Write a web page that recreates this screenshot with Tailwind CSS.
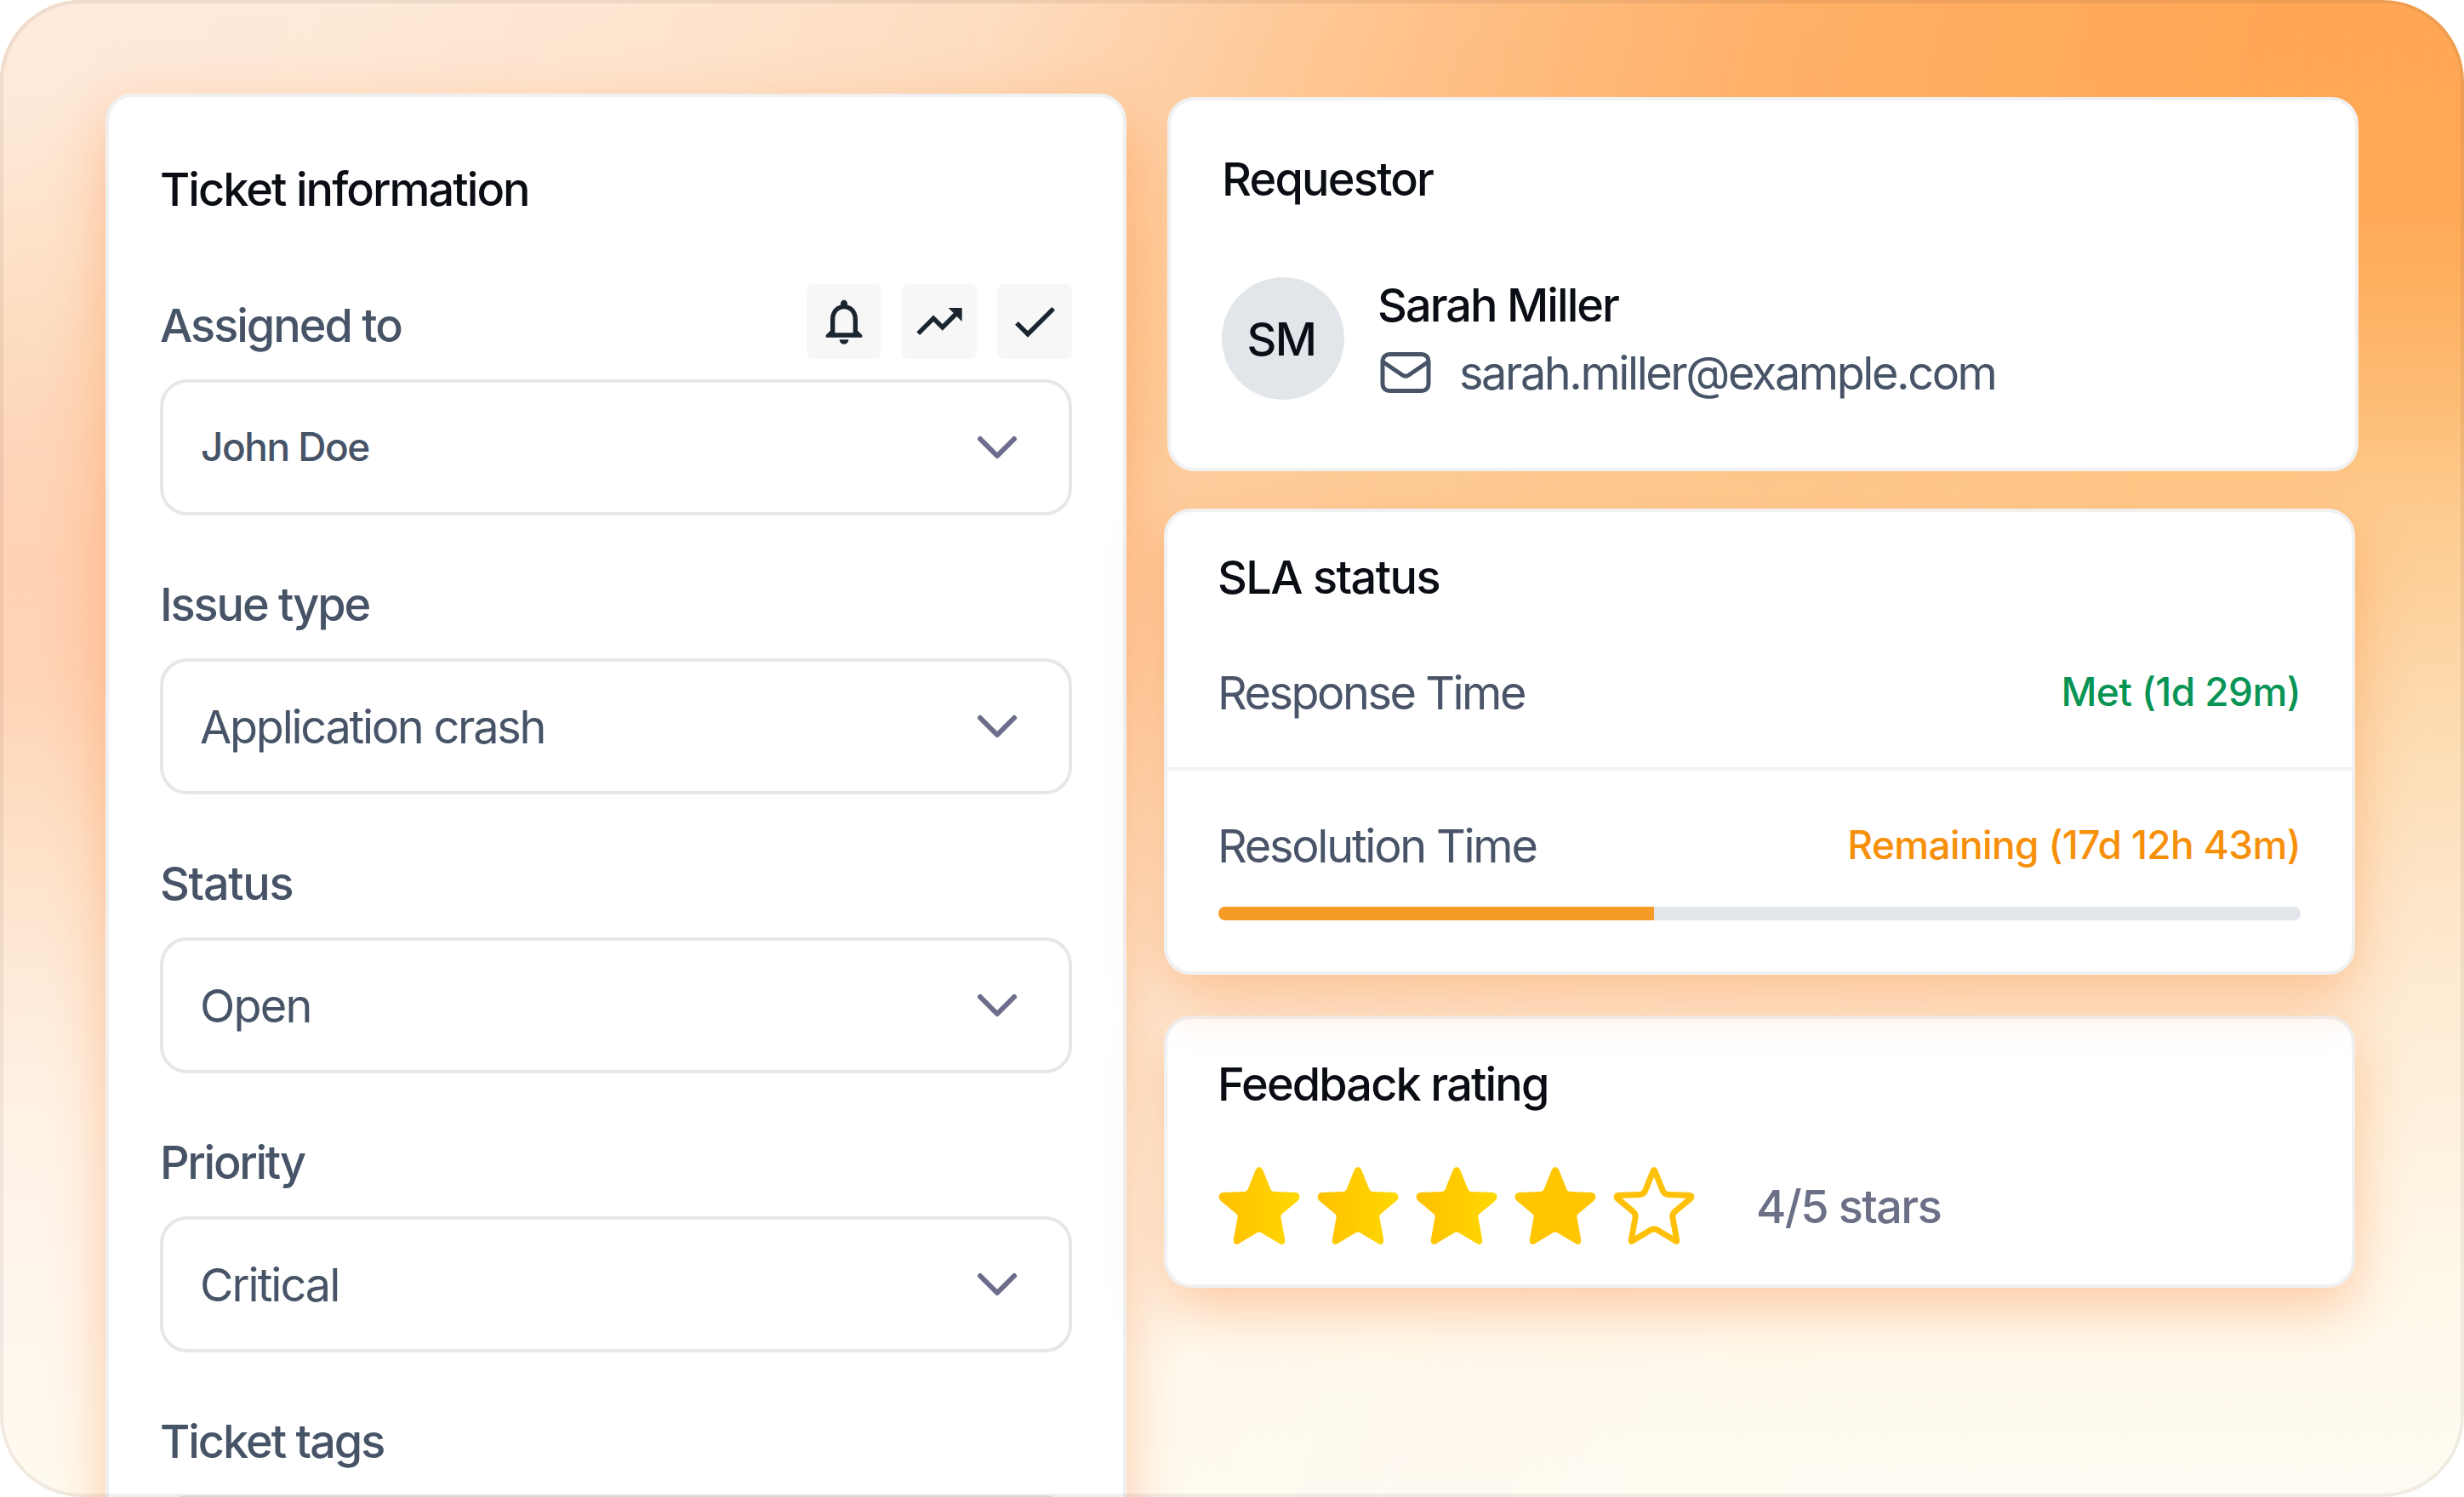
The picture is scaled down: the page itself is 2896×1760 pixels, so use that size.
<!DOCTYPE html>
<html lang="en">
<head>
    <meta charset="utf-8">
    <meta name="viewport" content="width=device-width, initial-scale=1">
    <title>Ticket information</title>
    <script src="https://cdn.jsdelivr.net/npm/@tailwindcss/browser@4"></script>
</head>
<body class="bg-white font-[Inter,'Liberation_Sans',sans-serif]">

    <!-- shared icons -->
    <svg class="absolute size-0">
        <defs>
            <linearGradient id="gold" x1="0" y1="0" x2="1" y2="0">
                <stop offset="0" stop-color="#ffc000"/>
                <stop offset="1" stop-color="#ffd800"/>
            </linearGradient>
            <path id="starPath" d="M44 5Q48 -1 52 5L61.5 28.5Q62.5 30.8 65 31L91 32Q95.5 33 95.4 37.5Q95.2 40 93 42L75 57Q73 58.8 73.4 61L78.3 88Q78.3 93.5 73.5 93L50 79Q48 78 46 79L22.5 93Q17.7 93.5 17.7 88L22.6 61Q23 58.8 21 57L3 42Q.8 40 .6 37.5Q.5 33 5 32L31 31Q33.5 30.8 34.5 28.5Z"/>
            <clipPath id="starClip"><use href="#starPath"/></clipPath>
        </defs>
        <symbol id="chevron" viewBox="0 0 64 64">
            <path d="M12 22l20 20 20-20" fill="none" stroke="#6b6d8a" stroke-width="6" stroke-linecap="round" stroke-linejoin="round"/>
        </symbol>
    </svg>

    <div class="relative w-[2896px] h-[1760px] overflow-hidden rounded-[96px]">

        <!-- background: right-hand tones, with the left-hand tones faded over them -->
        <div class="absolute inset-0 bg-[linear-gradient(180deg,#ffa755_0%,#ffa856_13%,#feae5e_18%,#fdbb72_26%,#fdcb8e_34%,#fdd5a4_43%,#fddeb6_51%,#fee8cd_62%,#fef0dc_74%,#fff8ea_85%,#fffbf2_100%)]"></div>
        <div class="absolute inset-0 bg-[linear-gradient(180deg,#feebdd_0%,#fee9d8_8%,#fee3cc_15%,#fddcbf_23%,#fed5b8_30%,#ffd1b4_37%,#ffd2b5_45%,#fed9bd_51%,#fee2cb_58%,#feead9_66%,#fff2e6_75%,#fff6ed_86%,#fffaee_100%)] [mask-image:linear-gradient(105deg,rgba(0,0,0,1)_2%,rgba(0,0,0,.97)_12%,rgba(0,0,0,.9)_24%,rgba(0,0,0,.78)_35%,rgba(0,0,0,.65)_40%,rgba(0,0,0,.5)_45%,rgba(0,0,0,.3)_54%,rgba(0,0,0,.13)_63%,rgba(0,0,0,0)_80%)]"></div>

        <main class="relative flex items-start pl-[124px] pt-[110px]">

            <!-- Ticket information -->
            <section class="w-[1200px] h-[1760px] shrink-0 rounded-[32px] border-4 border-[#f0f0f1] bg-white px-[60px] pt-[77px] text-[54px] leading-[64px] font-medium text-[#475467] shadow-[0_24px_64px_rgba(249,115,22,0.34)]">
                <h2 class="tracking-[-1.94px] text-[#0a0d14]">Ticket information</h2>

                <div class="mt-[79px] flex h-[88px] items-start justify-between">
                    <label class="mt-[17px] tracking-[-2px]">Assigned to</label>
                    <div class="flex gap-6">
                        <button class="flex size-[88px] items-center justify-center rounded-lg bg-[#f7f7f7] text-[#1b2530]">
                            <svg class="size-16" viewBox="0 0 24 24" fill="currentColor"><path d="M12 22c1.1 0 2-.9 2-2h-4c0 1.1.9 2 2 2zm6-6v-5c0-3.07-1.63-5.64-4.5-6.32V4c0-.83-.67-1.5-1.5-1.5s-1.5.67-1.5 1.5v.68C7.64 5.36 6 7.92 6 11v5l-2 2v1h16v-1l-2-2zm-2 1H8v-6c0-2.48 1.51-4.5 4-4.5s4 2.02 4 4.5v6z"/></svg>
                        </button>
                        <button class="flex size-[88px] items-center justify-center rounded-lg bg-[#f7f7f7] text-[#1b2530]">
                            <svg class="size-16" viewBox="0 0 24 24" fill="currentColor"><path d="M16 6l2.29 2.29-4.88 4.88-4-4L2 16.59 3.41 18l6-6 4 4 6.3-6.29L22 12V6z"/></svg>
                        </button>
                        <button class="flex size-[88px] items-center justify-center rounded-lg bg-[#f7f7f7] text-[#1b2530]">
                            <svg class="size-16" viewBox="0 0 24 24" fill="currentColor"><path d="M9 16.17L4.83 12l-1.42 1.41L9 19 21 7l-1.41-1.41z"/></svg>
                        </button>
                    </div>
                </div>
                <div class="mt-6 flex h-40 items-center justify-between rounded-[32px] border-4 border-[#e7e7e8] pl-11 pr-[52px]">
                    <span class="-mt-0.5 text-[46px] tracking-[-1.5px]">John Doe</span>
                    <svg class="size-16"><use href="#chevron"/></svg>
                </div>

                <div class="mt-[73px] tracking-[-2.1px]">Issue type</div>
                <div class="mt-[31px] flex h-40 items-center justify-between rounded-[32px] border-4 border-[#e7e7e8] pl-[43px] pr-[52px]">
                    <span class="pt-0.5 font-normal tracking-[-2.25px]">Application crash</span>
                    <svg class="size-16"><use href="#chevron"/></svg>
                </div>

                <div class="mt-[73px] tracking-[-1.3px]">Status</div>
                <div class="mt-[31px] flex h-40 items-center justify-between rounded-[32px] border-4 border-[#e7e7e8] pl-[43px] pr-[52px]">
                    <span class="pt-0.5 font-normal tracking-[-1.8px]">Open</span>
                    <svg class="size-16"><use href="#chevron"/></svg>
                </div>

                <div class="mt-[73px] tracking-[-2.3px]">Priority</div>
                <div class="mt-[31px] flex h-40 items-center justify-between rounded-[32px] border-4 border-[#e7e7e8] pl-[43px] pr-[52px]">
                    <span class="pt-0.5 font-normal tracking-[-2px]">Critical</span>
                    <svg class="size-16"><use href="#chevron"/></svg>
                </div>

                <div class="mt-[73px] tracking-[-2px]">Ticket tags</div>
                <div class="mt-[31px] h-40 rounded-[32px] border-4 border-[#e7e7e8]"></div>
            </section>

            <div class="ml-11 mt-1 flex flex-col gap-11 text-[54px] leading-[64px]">

                <!-- Requestor -->
                <section class="relative z-20 ml-1 h-[440px] w-[1400px] rounded-[32px] border-4 border-[#f1f1f1] bg-white px-[60px] pt-[61px]">
                    <h2 class="font-medium tracking-[-1.75px] text-[#0a0d14]">Requestor</h2>
                    <div class="mt-[83px] flex gap-[39px]">
                        <div class="flex size-36 items-center justify-center rounded-full bg-[#e2e6ea] pt-0.5 pr-1 font-medium tracking-[-1.5px] text-[#0a0d14]">SM</div>
                        <div class="pt-px">
                            <div class="font-medium tracking-[-1.95px] text-[#0a0d14]">Sarah Miller</div>
                            <div class="mt-4 flex items-center gap-[33px] pl-[3px] text-[#475467]">
                                <svg class="-mt-0.5 h-12 w-[60px]" viewBox="0 0 60 48" fill="none" stroke="currentColor" stroke-width="5" stroke-linejoin="round">
                                    <rect x="3" y="2.5" width="54" height="43" rx="8"/>
                                    <path d="M3.5 11.5L26.3 27Q30 29.5 33.7 27L56.5 11.5"/>
                                </svg>
                                <span class="tracking-[-2.42px]">sarah.miller@example.com</span>
                            </div>
                        </div>
                    </div>
                </section>

                <!-- SLA status -->
                <section class="relative z-10 w-[1400px] rounded-[32px] border-4 border-[#f1f1f1] bg-white shadow-[0_24px_64px_rgba(249,115,22,0.34)]">
                    <div class="border-b-4 border-[#f2f2f2] pl-[59px] pr-[60px] pt-[45px] pb-[55px]">
                        <h2 class="font-medium tracking-[-1.55px] text-[#0a0d14]">SLA status</h2>
                        <div class="mt-[72px] flex items-center justify-between">
                            <span class="tracking-[-2.48px] text-[#4a5468]">Response Time</span>
                            <span class="-mt-1 text-[46px] font-medium tracking-[-0.6px] text-[#079455]">Met (1d 29m)</span>
                        </div>
                    </div>
                    <div class="px-[60px] pt-[57px] pb-[60px]">
                        <div class="-ml-px flex items-center justify-between">
                            <span class="tracking-[-2.24px] text-[#4a5468]">Resolution Time</span>
                            <span class="-mt-1 text-[46px] font-medium tracking-[-0.64px] text-[#f79009]">Remaining (17d 12h 43m)</span>
                        </div>
                        <div class="mt-[39px] h-4 overflow-hidden rounded-full bg-[#e2e6ea]">
                            <div class="h-full bg-[#f59c27]" style="width: 40.25%"></div>
                        </div>
                    </div>
                </section>

                <!-- Feedback rating -->
                <section class="mt-1 w-[1400px] rounded-[32px] border-4 border-[#f0f0f0] bg-white px-[60px] pt-[45px] pb-11 shadow-[0_24px_64px_rgba(249,115,22,0.34)]">
                    <h2 class="-ml-px font-medium tracking-[-1.85px] text-[#0a0d14]">Feedback rating</h2>
                    <div class="mt-[63px] flex items-center">
                        <div class="flex gap-5">
                            <svg class="size-24" viewBox="0 0 96 96"><use href="#starPath" fill="url(#gold)"/></svg>
                            <svg class="size-24" viewBox="0 0 96 96"><use href="#starPath" fill="url(#gold)"/></svg>
                            <svg class="size-24" viewBox="0 0 96 96"><use href="#starPath" fill="url(#gold)"/></svg>
                            <svg class="size-24" viewBox="0 0 96 96"><use href="#starPath" fill="#ffc600"/></svg>
                            <svg class="size-24" viewBox="0 0 96 96"><use href="#starPath" fill="none" stroke="#ffc107" stroke-width="14" stroke-linejoin="round" clip-path="url(#starClip)"/></svg>
                        </div>
                        <span class="ml-[72px] pt-0.5 font-medium tracking-[-1.6px] text-[#6b7086]">4/5 stars</span>
                    </div>
                </section>
            </div>
        </main>

        <!-- frame outline, over everything -->
        <div class="pointer-events-none absolute inset-0 z-30 rounded-[96px] border-4 border-black/6"></div>
    </div>
</body>
</html>
